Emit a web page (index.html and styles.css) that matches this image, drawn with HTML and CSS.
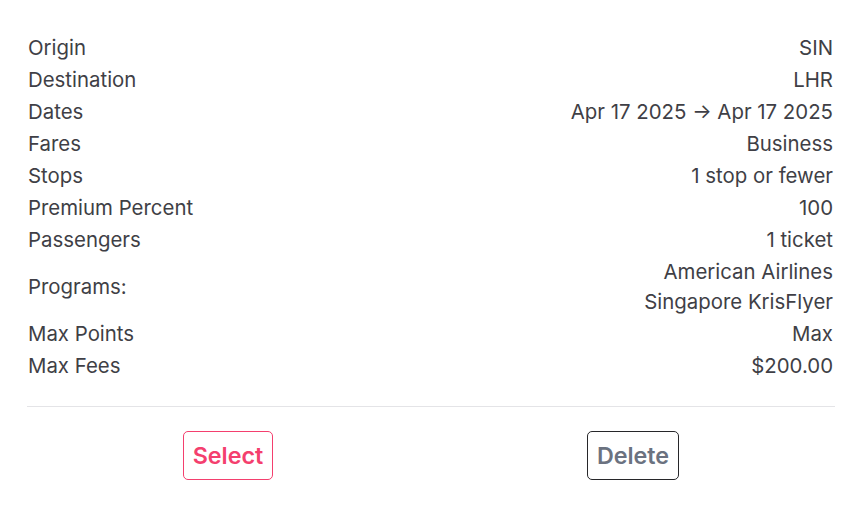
FILE: index.html
```
<!DOCTYPE html>
<html>
<head>
<meta charset="utf-8">
<link rel="stylesheet" href="styles.css">
</head>
<body>
<div class="card">
  <dl class="details">
    <div class="row"><dt>Origin</dt><dd>SIN</dd></div>
    <div class="row"><dt>Destination</dt><dd>LHR</dd></div>
    <div class="row"><dt>Dates</dt><dd>Apr 17 2025 → Apr 17 2025</dd></div>
    <div class="row"><dt>Fares</dt><dd>Business</dd></div>
    <div class="row"><dt>Stops</dt><dd>1 stop or fewer</dd></div>
    <div class="row"><dt>Premium Percent</dt><dd>100</dd></div>
    <div class="row"><dt>Passengers</dt><dd>1 ticket</dd></div>
    <div class="row"><dt>Programs:</dt><dd><div>American Airlines</div><div>Singapore KrisFlyer</div></dd></div>
    <div class="row"><dt>Max Points</dt><dd>Max</dd></div>
    <div class="row"><dt>Max Fees</dt><dd>$200.00</dd></div>
  </dl>
  <div class="actions">
    <div class="cell"><button class="btn btn-select">Select</button></div>
    <div class="cell"><button class="btn btn-delete">Delete</button></div>
  </div>
</div>
</body>
</html>
```
FILE: styles.css
```
* { box-sizing: border-box; }
html, body { margin: 0; padding: 0; background: #fff; }
body {
  font-family: Inter, "Liberation Sans", sans-serif;
  color: #3f3f46;
}
.card {
  padding: 32px 31px 0 27px;
}
.details {
  margin: 0;
  padding: 0 0 24px 1px;
  border-bottom: 1px solid #e4e4e7;
}
.row {
  display: flex;
  justify-content: space-between;
  align-items: center;
  padding: 1px 0;
  font-size: 20.4px;
  line-height: 30px;
}
.row dt { margin: 0; }
.row dd { margin: 0 2px 0 0; text-align: right; }
.actions {
  display: flex;
  padding-top: 24px;
}
.cell {
  flex: 1;
  display: flex;
  justify-content: center;
}
.btn {
  font-family: Inter, "Liberation Sans", sans-serif;
  font-size: 23.3px;
  font-weight: 600;
  height: 49px;
  padding: 0 9px;
  border-radius: 5px;
  background: #fff;
  cursor: pointer;
}
.btn-select {
  color: #f43f6e;
  border: 1.5px solid #f43f6e;
  margin-right: 2px;
}
.btn-delete {
  color: #6b7280;
  border: 1.5px solid #27272a;
}
```
